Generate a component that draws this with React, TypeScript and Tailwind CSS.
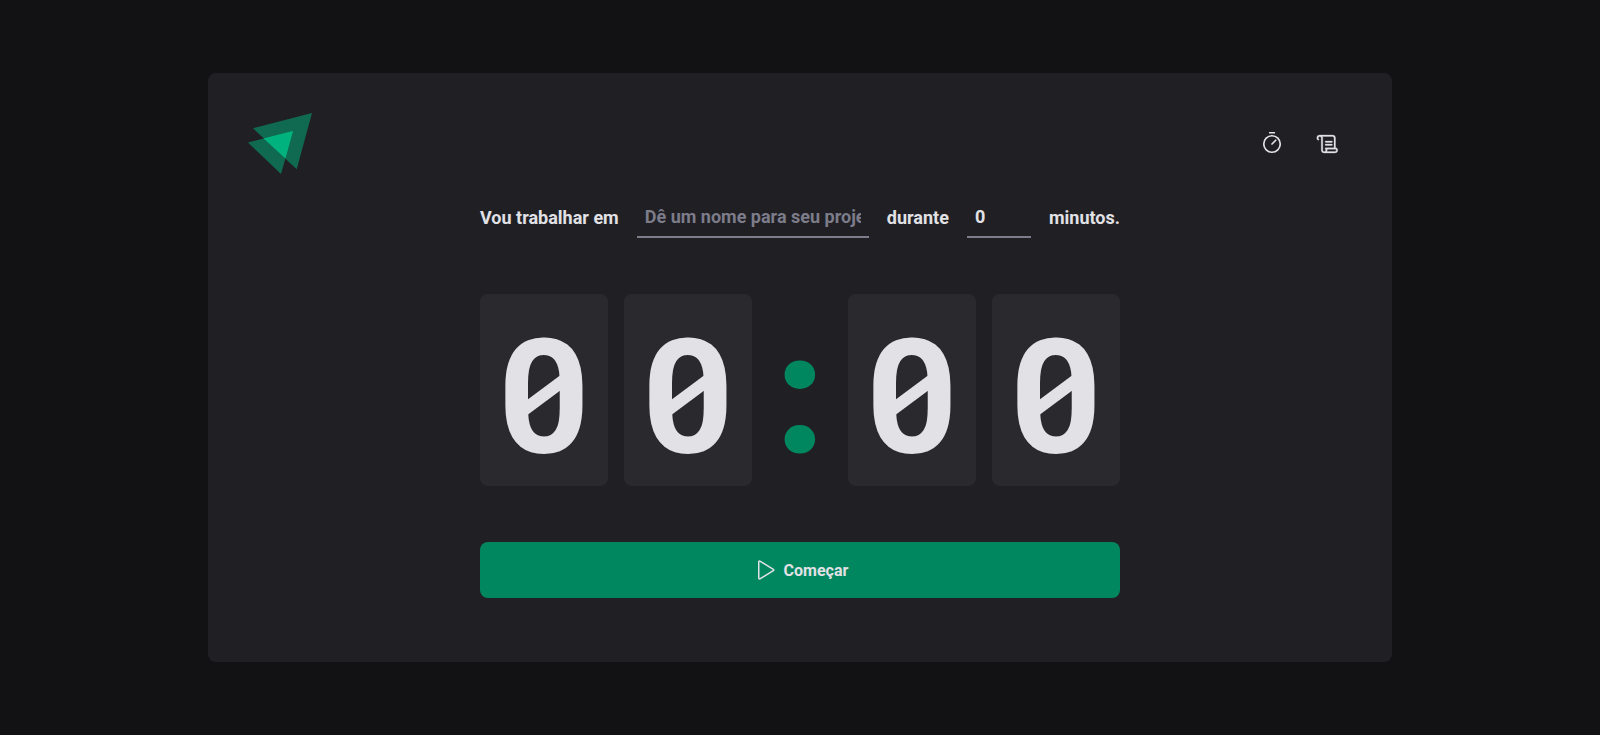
import { useState } from 'react'
import { PiPlay, PiScroll } from 'react-icons/pi'

function Logo() {
  return (
    <svg width="64" height="62" viewBox="0 0 64 62" fill="#00B37E" role="img" aria-label="Ignite">
      <path d="M5 15.2 64 0 48.7 56.2Z" opacity=".5" />
      <path d="M0 29.5 45 18 33 61Z" opacity=".5" />
      <path d="M15.7 25.4 45 18 37.4 45.3Z" />
    </svg>
  )
}

function TimerIcon() {
  return (
    <svg
      width="24"
      height="24"
      viewBox="0 0 256 256"
      fill="none"
      stroke="currentColor"
      strokeWidth="18"
      strokeLinecap="round"
      aria-hidden="true"
    >
      <circle cx="128" cy="128" r="88" />
      <path d="M128 128 168 88M104 8h48" />
    </svg>
  )
}

function Header() {
  return (
    <header className="flex items-center justify-between">
      <Logo />
      <nav className="flex gap-2">
        <a href="#timer" title="Timer" className="flex size-12 items-center justify-center">
          <TimerIcon />
        </a>
        <a href="#history" title="Histórico" className="flex size-12 items-center justify-center">
          <PiScroll size={24} stroke="currentColor" strokeWidth={3} />
        </a>
      </nav>
    </header>
  )
}

function Digit({ value }: { value: string }) {
  return (
    <span className="relative flex w-32 justify-center rounded-lg bg-[#29292e] pt-10 pb-6">
      {value}
      {value === '0' && (
        <svg
          className="absolute inset-0 m-auto overflow-hidden"
          width="36"
          height="56"
          viewBox="0 0 36 56"
          aria-hidden="true"
        >
          <path d="M-6 50.8 42 15.2" stroke="#e1e1e6" strokeWidth="12.2" />
        </svg>
      )}
    </span>
  )
}

export default function App() {
  const [task, setTask] = useState('')
  const [minutes, setMinutes] = useState(0)

  const field =
    'h-10 border-b-2 border-[#7c7c8a] bg-transparent px-2 pb-0.5 leading-[normal] font-bold outline-none placeholder:text-[#7c7c8a]'

  return (
    <div className="flex min-h-screen items-center justify-center bg-[#121214] font-['Roboto',sans-serif] text-[#e1e1e6]">
      <div className="flex w-full max-w-[1184px] flex-col gap-[23px] rounded-lg bg-[#202024] p-10">
        <Header />
        <main className="flex justify-center pb-6">
          <form className="flex flex-col gap-14" onSubmit={(e) => e.preventDefault()}>
            <div className="flex items-center justify-between text-lg font-bold">
              <label htmlFor="task">Vou trabalhar em</label>
              <input
                id="task"
                className={`${field} w-[232px]`}
                placeholder="Dê um nome para seu projeto"
                value={task}
                onChange={(e) => setTask(e.target.value)}
              />
              <label htmlFor="minutes">durante</label>
              <input
                id="minutes"
                type="number"
                className={`${field} w-16`}
                value={minutes}
                onChange={(e) => setMinutes(Number(e.target.value))}
              />
              <span>minutos.</span>
            </div>

            <div className="flex gap-4 text-[160px] leading-[128px] font-bold">
              <Digit value="0" />
              <Digit value="0" />
              <span className="flex w-16 justify-center pt-[38px] text-[#00875f] [-webkit-text-stroke:5px_#00875f]">
                :
              </span>
              <Digit value="0" />
              <Digit value="0" />
            </div>

            <button
              type="submit"
              className="flex h-14 items-center justify-center gap-2 rounded-lg bg-[#00875f] leading-[normal] font-bold"
            >
              <PiPlay size={24} />
              Começar
            </button>
          </form>
        </main>
      </div>
    </div>
  )
}
